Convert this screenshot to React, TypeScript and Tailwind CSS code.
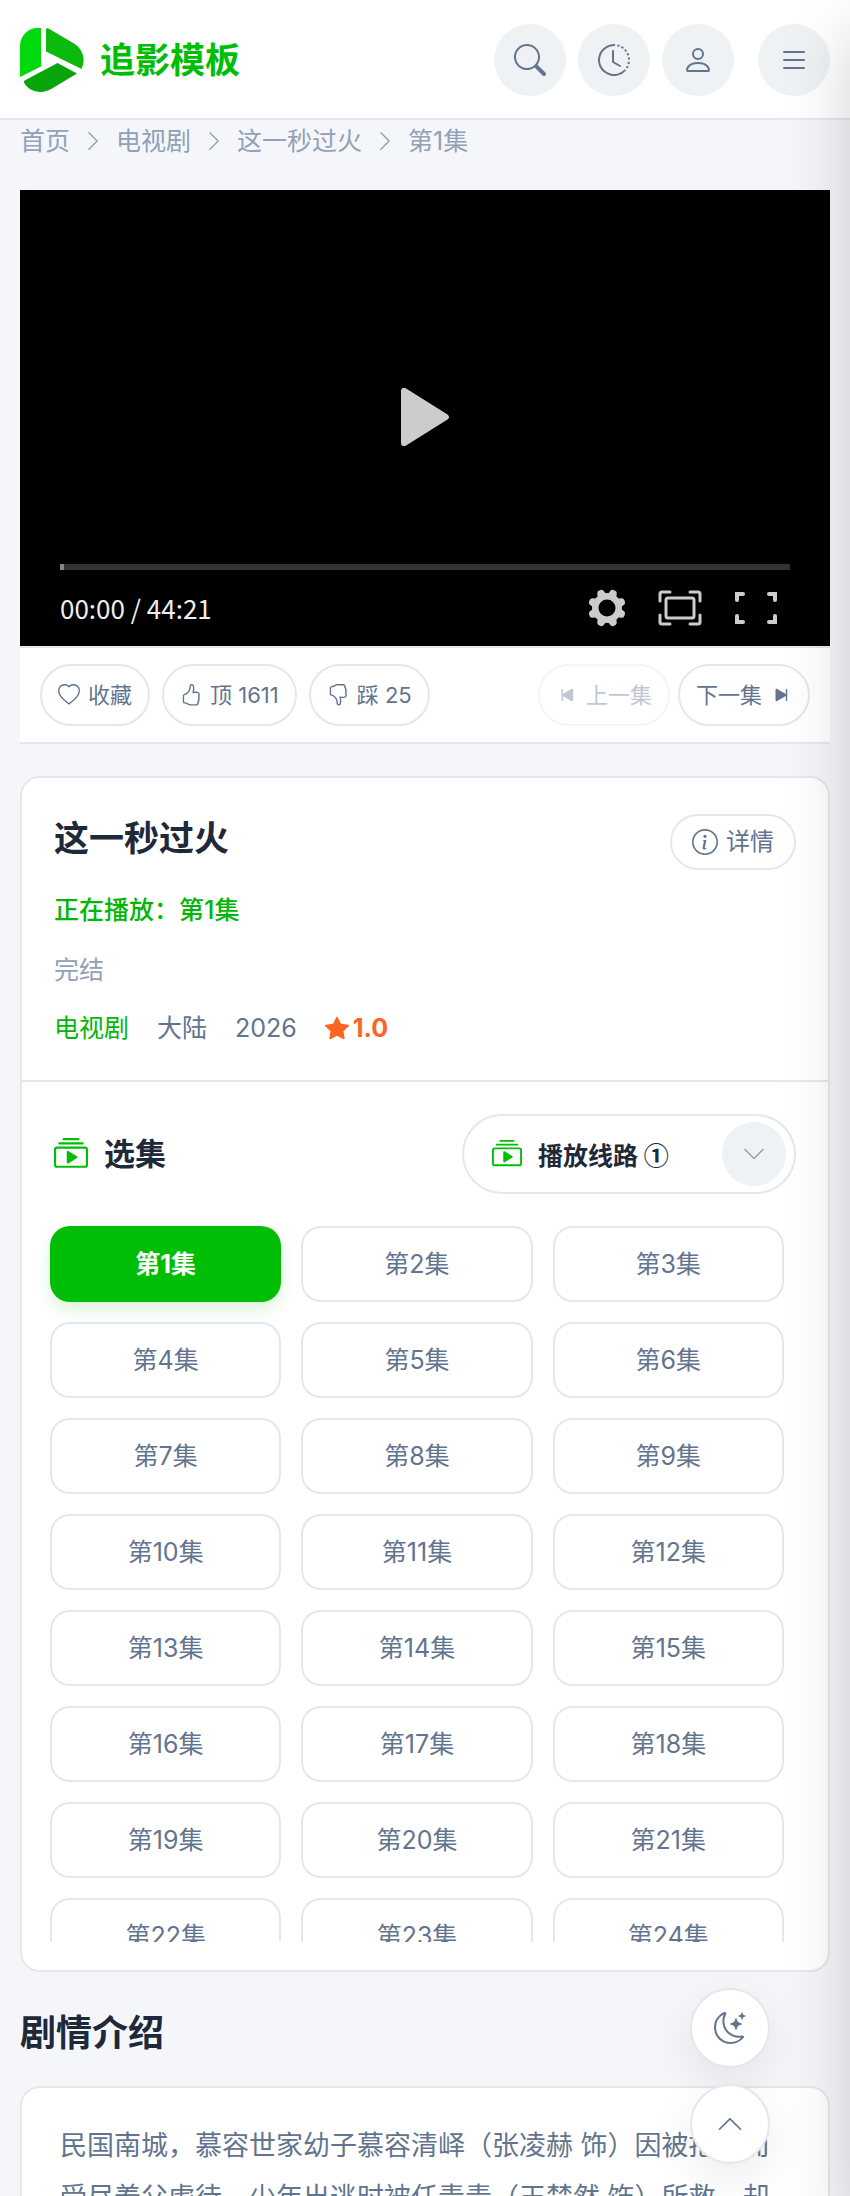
import { useState } from "react";
import {
  BsChevronDown,
  BsChevronRight,
  BsChevronUp,
  BsClockHistory,
  BsCollectionPlay,
  BsHandThumbsDown,
  BsHandThumbsUp,
  BsHeart,
  BsInfoCircle,
  BsList,
  BsMoonStars,
  BsPerson,
  BsSearch,
  BsSkipEndFill,
  BsSkipStartFill,
  BsStarFill,
} from "react-icons/bs";

const TOTAL_EPISODES = 24;

const episodes = Array.from({ length: TOTAL_EPISODES }, (_, i) => i + 1);

const crumbs = ["首页", "电视剧", "这一秒过火"];

const navButtons = [
  { label: "搜索", Icon: BsSearch },
  { label: "历史记录", Icon: BsClockHistory },
  { label: "用户", Icon: BsPerson },
];

const Logo = () => (
  <svg viewBox="0 0 64 64" className="size-16 shrink-0" aria-hidden="true">
    <path d="M21 0V38.500L0 49V18C0 7 9 0 17 0Z" fill="#00d90b" />
    <path
      d="M26 1C27 0 28 .3 29 .8L54 15.500C63 21 66 32 61.500 41L26 23.500Z"
      fill="#0bb90f"
    />
    <path
      d="M37.500 35L57 45.500L32 60.500C22 67 9 64 4 54.500C3.600 53.500 4 52.800 5 52.200Z"
      fill="#08a60c"
    />
  </svg>
);

const Header = () => (
  <header className="flex items-center justify-between border-b-2 border-[#e5e7ea] bg-white px-5 pt-6 pb-[22px]">
    <a href="#" className="flex items-center gap-4">
      <Logo />
      <span className="text-[35px] leading-[60px] font-bold text-[#00be06]">
        追影模板
      </span>
    </a>
    <nav className="flex gap-3">
      {navButtons.map(({ label, Icon }) => (
        <button
          key={label}
          aria-label={label}
          className="flex size-[72px] items-center justify-center rounded-full bg-[#eef2f5] text-slate-500"
        >
          <Icon size={32} />
        </button>
      ))}
      <button
        aria-label="菜单"
        className="ml-3 flex size-[72px] items-center justify-center rounded-full bg-[#eef2f5] text-slate-500"
      >
        <BsList size={32} />
      </button>
    </nav>
  </header>
);

const Player = () => (
  <div className="flex aspect-video flex-col justify-end bg-black px-10 text-[#ccc]">
    <div className="flex flex-1 items-center justify-center pt-20">
      <button aria-label="播放">
        <svg width="48" height="58" viewBox="0 0 48 58" fill="currentColor">
          <path d="M0 3C0 0 3 -1 5.500 .8L46.500 26.500C48.500 28 48.500 30 46.500 31.500L5.500 57.200C3 59 0 58 0 55Z" />
        </svg>
      </button>
    </div>
    <div className="h-[6px] bg-[#333]">
      <div className="h-full w-1 bg-[#858585]" />
    </div>
    <div className="flex h-[76px] items-center justify-between pr-3">
      <span className="font-['Noto_Sans_CJK_SC',sans-serif] text-[26px] leading-10 text-[#eee]">
        00:00 / 44:21
      </span>
      <div className="flex items-center gap-8">
        <button aria-label="设置">
          <svg width="38" height="38" viewBox="-19 -19 38 38">
            <g fill="currentColor">
              {[0, 45, 90, 135].map((deg) => (
                <path
                  key={deg}
                  transform={`rotate(${deg + 22.5})`}
                  d="M-4.500 -13L-3.500 -17Q-3 -19 -1 -19H1Q3 -19 3.500 -17L4.500 -13V13L3.500 17Q3 19 1 19H-1Q-3 19 -3.500 17L-4.500 13Z"
                />
              ))}
              <circle r="15" />
            </g>
            <circle r="8.500" fill="#000" />
          </svg>
        </button>
        <button aria-label="网页全屏">
          <svg
            width="44"
            height="36"
            viewBox="0 0 44 36"
            fill="none"
            stroke="currentColor"
            strokeWidth="3"
            strokeLinecap="round"
          >
            <path d="M12 2H4Q2 2 2 4V11M32 2H40Q42 2 42 4V11M12 34H4Q2 34 2 32V25M32 34H40Q42 34 42 32V25" />
            <rect x="8" y="8" width="28" height="20" rx="2" />
          </svg>
        </button>
        <button aria-label="全屏">
          <svg
            width="44"
            height="34"
            viewBox="0 0 44 34"
            fill="none"
            stroke="currentColor"
            strokeWidth="4"
            strokeLinecap="round"
          >
            <path d="M9 3H3V9M35 3H41V9M9 31H3V25M35 31H41V25" />
          </svg>
        </button>
      </div>
    </div>
  </div>
);

const actionClass =
  "flex h-[62px] items-center gap-2 rounded-full border-2 border-[#e5e7ea] px-4 text-[22px] leading-8 whitespace-nowrap text-slate-500";

const ActionBar = () => (
  <div className="flex justify-between border-y-2 border-[#e5e7ea] bg-white px-5 py-4">
    <div className="flex gap-3">
      <button className={actionClass}>
        <BsHeart size={22} />
        收藏
      </button>
      <button className={actionClass}>
        <BsHandThumbsUp size={22} />
        顶 1611
      </button>
      <button className={actionClass}>
        <BsHandThumbsDown size={22} />
        踩 25
      </button>
    </div>
    <div className="flex gap-2">
      <button disabled className={`${actionClass} opacity-40`}>
        <BsSkipStartFill size={22} />
        上一集
      </button>
      <button className={actionClass}>
        下一集
        <BsSkipEndFill size={22} />
      </button>
    </div>
  </div>
);

export default function App() {
  const [current, setCurrent] = useState(1);

  return (
    <div className="h-screen overflow-hidden bg-[#f4f6fa] font-[Inter,'Noto_Sans_CJK_SC',sans-serif] text-gray-800">
      <Header />

      <main className="px-5">
        {/* Breadcrumb */}
        <nav className="mb-7 flex items-center gap-3 text-[25px] leading-[42px] text-slate-400">
          {crumbs.map((crumb) => (
            <span key={crumb} className="flex items-center gap-3">
              <a href="#">{crumb}</a>
              <BsChevronRight size={22} />
            </span>
          ))}
          <span>第{current}集</span>
        </nav>

        <Player />
        <ActionBar />

        {/* Info + episodes */}
        <section className="mt-8 rounded-[20px] border-2 border-[#e5e7ea] bg-white">
          <div className="border-b-2 border-[#e5e7ea] px-8 pt-9 pb-8 text-[25px] leading-10">
            <div className="flex items-start justify-between">
              <h1 className="text-[35px] leading-[48px] font-bold">
                这一秒过火
              </h1>
              <button className="flex h-14 items-center gap-2 rounded-full border-2 border-[#e5e7ea] px-5 text-[24px] leading-8 text-slate-500">
                <BsInfoCircle size={26} />
                详情
              </button>
            </div>
            <p className="mt-5 font-medium text-[#00b707]">
              正在播放：第{current}集
            </p>
            <p className="mt-5 text-slate-400">完结</p>
            <div className="mt-[18px] flex items-center gap-7 text-slate-500">
              <a href="#" className="text-[#00b707]">
                电视剧
              </a>
              <span>大陆</span>
              <span>2026</span>
              <span className="flex items-center gap-1 font-bold text-[#ff6422]">
                <BsStarFill size={24} />
                1.0
              </span>
            </div>
          </div>

          <div className="flex items-center justify-between px-8 pt-8">
            <h2 className="flex items-center gap-4 text-[31px] leading-[48px] font-bold">
              <BsCollectionPlay size={34} className="text-[#00be06]" />
              选集
            </h2>
            <button
              aria-haspopup="listbox"
              className="flex h-20 w-[334px] items-center rounded-full border-2 border-[#e5e7ea] pr-2 pl-7"
            >
              <BsCollectionPlay size={30} className="text-[#00be06]" />
              <span className="ml-4 font-['Noto_Sans_CJK_SC',sans-serif] text-[25px] leading-10 font-bold">
                播放线路 ①
              </span>
              <span className="ml-auto flex size-16 items-center justify-center rounded-full bg-[#eef2f5] text-slate-400">
                <BsChevronDown size={24} />
              </span>
            </button>
          </div>

          <div className="mt-3 mb-7 h-[736px] overflow-y-auto pt-5 pr-11 pl-7 [scrollbar-width:none]">
            <div className="grid grid-cols-3 gap-5">
              {episodes.map((n) => (
                <button
                  key={n}
                  onClick={() => setCurrent(n)}
                  className={`h-[76px] rounded-[20px] text-[25px] leading-10 ${
                    n === current
                      ? "bg-[#00be06] font-bold text-white shadow-[0_8px_16px_rgba(0,190,6,0.15)]"
                      : "border-2 border-[#e5e7ea] text-slate-500"
                  }`}
                >
                  第{n}集
                </button>
              ))}
            </div>
          </div>
        </section>

        {/* Synopsis */}
        <h2 className="mt-9 mb-7 text-[36px] leading-[50px] font-bold">
          剧情介绍
        </h2>
        <section className="rounded-[20px] border-2 border-[#e5e7ea] bg-white px-[38px] py-8">
          <p className="text-[27px] leading-[52px] text-slate-500">
            民国南城，慕容世家幼子慕容清峄（张凌赫 饰）因被抱错而受尽养父虐待，少年出逃时被任青青（王楚然 饰）所救，却
          </p>
        </section>
      </main>

      {/* Floating tools */}
      <div className="fixed right-20 bottom-8 z-30 flex flex-col gap-4">
        <button
          aria-label="夜间模式"
          className="flex size-20 items-center justify-center rounded-full border-2 border-[#e5e7ea] bg-white text-slate-500 shadow-[0_16px_48px_rgba(0,0,0,0.08)]"
        >
          <BsMoonStars size={32} />
        </button>
        <button
          aria-label="返回顶部"
          className="flex size-20 items-center justify-center rounded-full border-2 border-[#e5e7ea] bg-white text-slate-500 shadow-[0_16px_48px_rgba(0,0,0,0.08)]"
        >
          <BsChevronUp size={28} />
        </button>
      </div>

      {/* Closed side drawer, only its shadow reaches the page */}
      <aside className="fixed top-0 left-full z-40 h-full w-80 bg-white shadow-[0_32px_64px_rgba(0,0,0,0.175)]" />
    </div>
  );
}
